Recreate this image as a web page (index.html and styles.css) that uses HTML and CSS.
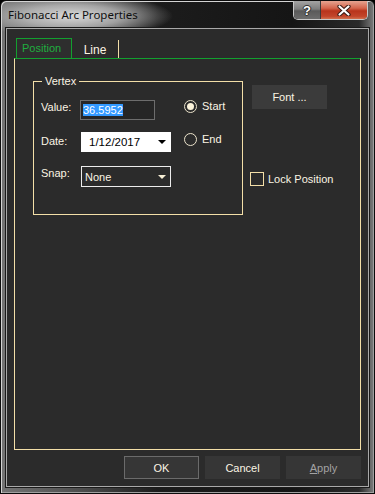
FILE: index.html
```html
<!DOCTYPE html>
<html>
<head>
<meta charset="utf-8">
<link rel="stylesheet" href="styles.css">
</head>
<body>
<div class="window">
  <div class="titlebar">
    <span class="title">Fibonacci Arc Properties</span>
    <div class="caption">
      <div class="cap-btn help">?</div>
      <div class="cap-btn close">
        <svg width="14" height="11" viewBox="0 0 14 11">
          <path d="M2.5 1.5 L11.5 9.5 M11.5 1.5 L2.5 9.5" stroke="#3a1a14" stroke-width="4.2" stroke-linecap="round"/>
          <path d="M2.5 1.5 L11.5 9.5 M11.5 1.5 L2.5 9.5" stroke="#ffffff" stroke-width="2.2" stroke-linecap="round"/>
        </svg>
      </div>
    </div>
  </div>
  <div class="client">
    <div class="tabs">
      <div class="tab active">Position</div>
      <div class="tab line">Line</div>
    </div>
    <div class="panel">
      <fieldset class="group">
        <legend>Vertex</legend>
        <div class="grid">
          <span class="lbl l1">Value:</span>
          <div class="textbox"><span class="sel">36.5952</span></div>
          <div class="radio-row"><span class="radio on"></span><span>Start</span></div>
          <span class="lbl l2">Date:</span>
          <div class="datepicker"><span>1/12/2017</span><span class="tri dark"></span></div>
          <div class="radio-row r2"><span class="radio"></span><span>End</span></div>
          <span class="lbl l3">Snap:</span>
          <div class="combo"><span>None</span><span class="tri light"></span></div>
          <div></div>
        </div>
      </fieldset>
      <div class="side">
        <div class="font-btn">Font ...</div>
        <div class="check-row"><span class="check"></span><span>Lock Position</span></div>
      </div>
    </div>
    <div class="buttons">
      <div class="btn default">OK</div>
      <div class="btn">Cancel</div>
      <div class="btn disabled"><u>A</u>pply</div>
    </div>
  </div>
</div>
</body>
</html>
```

FILE: styles.css
```css
* { box-sizing: border-box; }
html, body { margin: 0; padding: 0; }
body {
  width: 375px;
  height: 494px;
  overflow: hidden;
  background: #000;
  font-family: "Liberation Sans", Arial, sans-serif;
  font-size: 11px;
  color: #fbf5e4;
}

.window {
  width: 375px;
  height: 494px;
  border: 1px solid #0c0c0c;
  border-radius: 6px 6px 0 0;
  background:
    radial-gradient(ellipse 100px 22px at 72px 15px, rgba(225,225,225,0.95) 0%, rgba(200,200,200,0.72) 50%, rgba(160,160,160,0) 100%),
    linear-gradient(90deg, #747474 0%, #4c4c4c 22%, #1c1c1c 42%, #151515 78%, #2a2a2a 96%, #7e7e7e 100%);
  box-shadow: inset 1px 1px 0 #d4d4d4, inset -1px -1px 0 #a0a0a0;
  display: flex;
  flex-direction: column;
}

.titlebar {
  height: 27px;
  flex: none;
  display: flex;
  align-items: flex-start;
  padding-left: 7px;
}
.title {
  font-family: "Noto Sans", "Open Sans", sans-serif;
  font-size: 11.5px;
  line-height: 16px;
  margin-top: 6px;
  color: #101010;
}
.caption {
  display: flex;
  margin-left: auto;
  margin-right: 6px;
  height: 19px;
  border: 1px solid #c8c8c8;
  border-top: none;
  border-radius: 0 0 5px 5px;
  overflow: hidden;
}
.cap-btn {
  display: flex;
  align-items: center;
  justify-content: center;
}
.help {
  width: 27px;
  border-right: 1px solid #3a3a3a;
  background: linear-gradient(180deg, #a4a4a4 0%, #7e7e7e 45%, #5a5a5a 55%, #6c6c6c 100%);
  color: #fff;
  font-family: "Liberation Sans", Arial, sans-serif;
  font-weight: bold;
  font-size: 13px;
  text-shadow: 0 0 1px #222, 1px 0 0 #333, -1px 0 0 #333, 0 1px 0 #333, 0 -1px 0 #333;
}
.close {
  width: 46px;
  background: linear-gradient(180deg, #e6a491 0%, #d4654c 40%, #b8341c 55%, #c2452a 85%, #d2704e 100%);
}

.client {
  flex: 1;
  margin: 0 5px 6px;
  border: 1px solid #a9a9a9;
  box-shadow: 0 0 0 1px #1a1a1a;
  background: #2b2b2b;
  display: flex;
  flex-direction: column;
  padding: 9px 7px 7px;
}

.tabs {
  display: flex;
  align-items: flex-end;
  height: 20px;
  padding-left: 2px;
}
.tab {
  line-height: 13px;
}
.tab.active {
  width: 56px;
  height: 20px;
  border: 1px solid #12a02f;
  border-bottom: none;
  background: #2e2e2e;
  color: #1fae3f;
  padding: 3px 0 0 5px;
}
.tab.line {
  width: 47px;
  height: 18px;
  border-right: 1px solid #f3dfa8;
  padding: 4px 0 0;
  font-size: 12px;
  text-align: center;
}

.panel {
  flex: 1;
  border: 1px solid #f3dfa8;
  border-top-color: #12a02f;
  display: flex;
  align-items: flex-start;
}

.group {
  margin: 16px 0 0 18px;
  width: 210px;
  padding: 12px 0 27px 7px;
  border: 1px solid #f3dfa8;
  min-width: 0;
}
.group legend {
  padding: 0 3px;
  margin-left: 1px;
  line-height: 13px;
  font-size: 11px;
}

.grid {
  display: grid;
  grid-template-columns: 39px 91px 1fr;
  grid-template-rows: 32px 34px 21px;
  align-items: start;
}
.lbl { line-height: 13px; }
.l1 { padding-top: 1px; }
.l2 { padding-top: 3px; }
.l3 { padding-top: 1px; }

.textbox {
  width: 75px;
  height: 20px;
  border: 1px solid #6d6d6d;
  background: #262626;
  display: flex;
  align-items: center;
  padding-left: 2px;
}
.sel {
  background: #3399ff;
  color: #fff;
  line-height: 12px;
}

.datepicker {
  margin-left: 1px;
  width: 90px;
  height: 20px;
  background: #fff;
  color: #000;
  font-size: 11.5px;
  display: flex;
  align-items: center;
  padding-left: 8px;
}
.combo {
  margin-left: 1px;
  width: 90px;
  height: 21px;
  border: 1px solid #ececec;
  display: flex;
  align-items: center;
  padding-left: 3px;
}
.tri {
  margin-left: auto;
  margin-right: 5px;
  width: 0;
  height: 0;
  border-left: 4px solid transparent;
  border-right: 4px solid transparent;
  border-top: 4px solid #000;
}
.tri.light { border-top-color: #f7efd6; margin-right: 4px; }

.radio-row {
  display: flex;
  align-items: center;
  gap: 5px;
  padding-left: 13px;
  line-height: 13px;
}
.radio-row.r2 { margin-top: 1px; }
.radio {
  width: 13px;
  height: 13px;
  border: 1px solid #ece4cc;
  border-radius: 50%;
  display: flex;
  align-items: center;
  justify-content: center;
}
.radio.on::after {
  content: "";
  width: 7px;
  height: 7px;
  border-radius: 50%;
  background: #fbf3da;
}

.side {
  margin: 26px 0 0 9px;
  display: flex;
  flex-direction: column;
  align-items: flex-start;
}
.font-btn {
  width: 75px;
  height: 24px;
  background: #3b3b3b;
  display: flex;
  align-items: center;
  justify-content: center;
}
.check-row {
  margin: 63px 0 0 -2px;
  display: flex;
  align-items: center;
  gap: 4px;
  line-height: 13px;
}
.check {
  width: 14px;
  height: 14px;
  border: 1px solid #f3dfa8;
}

.buttons {
  display: flex;
  justify-content: flex-end;
  gap: 6px;
  margin-top: 6px;
}
.btn {
  width: 75px;
  height: 23px;
  background: #363636;
  display: flex;
  align-items: center;
  justify-content: center;
}
.btn.default { border: 1px solid #6b6b6b; }
.btn.disabled { color: #a3a3a3; }
.btn.disabled u { text-underline-offset: 1px; }
```
